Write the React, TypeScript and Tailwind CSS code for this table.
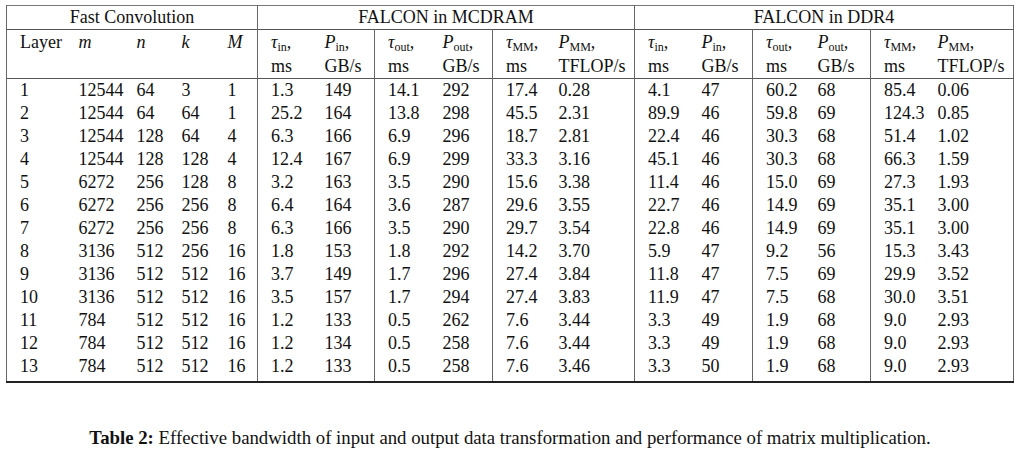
import React from "react";

const rows: string[][] = [
  ["1", "12544", "64", "3", "1", "1.3", "149", "14.1", "292", "17.4", "0.28", "4.1", "47", "60.2", "68", "85.4", "0.06"],
  ["2", "12544", "64", "64", "1", "25.2", "164", "13.8", "298", "45.5", "2.31", "89.9", "46", "59.8", "69", "124.3", "0.85"],
  ["3", "12544", "128", "64", "4", "6.3", "166", "6.9", "296", "18.7", "2.81", "22.4", "46", "30.3", "68", "51.4", "1.02"],
  ["4", "12544", "128", "128", "4", "12.4", "167", "6.9", "299", "33.3", "3.16", "45.1", "46", "30.3", "68", "66.3", "1.59"],
  ["5", "6272", "256", "128", "8", "3.2", "163", "3.5", "290", "15.6", "3.38", "11.4", "46", "15.0", "69", "27.3", "1.93"],
  ["6", "6272", "256", "256", "8", "6.4", "164", "3.6", "287", "29.6", "3.55", "22.7", "46", "14.9", "69", "35.1", "3.00"],
  ["7", "6272", "256", "256", "8", "6.3", "166", "3.5", "290", "29.7", "3.54", "22.8", "46", "14.9", "69", "35.1", "3.00"],
  ["8", "3136", "512", "256", "16", "1.8", "153", "1.8", "292", "14.2", "3.70", "5.9", "47", "9.2", "56", "15.3", "3.43"],
  ["9", "3136", "512", "512", "16", "3.7", "149", "1.7", "296", "27.4", "3.84", "11.8", "47", "7.5", "69", "29.9", "3.52"],
  ["10", "3136", "512", "512", "16", "3.5", "157", "1.7", "294", "27.4", "3.83", "11.9", "47", "7.5", "68", "30.0", "3.51"],
  ["11", "784", "512", "512", "16", "1.2", "133", "0.5", "262", "7.6", "3.44", "3.3", "49", "1.9", "68", "9.0", "2.93"],
  ["12", "784", "512", "512", "16", "1.2", "134", "0.5", "258", "7.6", "3.44", "3.3", "49", "1.9", "68", "9.0", "2.93"],
  ["13", "784", "512", "512", "16", "1.2", "133", "0.5", "258", "7.6", "3.46", "3.3", "50", "1.9", "68", "9.0", "2.93"],
];

const widths = [59, 56, 45, 46, 43, 54, 63, 55, 63, 53, 89, 54, 64, 52, 66, 53, 89];
const rightBorder = new Set([4, 6, 8, 10, 12, 14, 16]);

function cellBorder(i: number) {
  let c = "";
  if (i === 0) c += " border-l border-l-[#666]";
  if (rightBorder.has(i)) c += " border-r border-r-[#666]";
  return c;
}

function Sym({ base, sub }: { base: string; sub: string }) {
  return (
    <span className="whitespace-nowrap">
      <span className="italic">{base}</span>
      <span className="text-[12px] leading-[0px] relative top-[3px]">{sub}</span>
      <span>,</span>
    </span>
  );
}

const headers: { base: string; sub: string; unit: string }[] = [
  { base: "τ", sub: "in", unit: "ms" },
  { base: "P", sub: "in", unit: "GB/s" },
  { base: "τ", sub: "out", unit: "ms" },
  { base: "P", sub: "out", unit: "GB/s" },
  { base: "τ", sub: "MM", unit: "ms" },
  { base: "P", sub: "MM", unit: "TFLOP/s" },
];

const serif = { fontFamily: '"Liberation Serif", "Times New Roman", serif' };

export default function App() {
  return (
    <div className="w-[1020px] h-[460px] bg-white text-[#111] overflow-hidden" style={serif}>
      <div className="pl-[6px] pt-[5px]">
        <table className="border-collapse table-fixed text-[18px] leading-[23px]" style={serif}>
          <colgroup>
            {widths.map((w, i) => (
              <col key={i} style={{ width: w }} />
            ))}
          </colgroup>
          <thead>
            <tr className="border-t border-t-[#777] border-b border-b-[#555] h-[24px]">
              <th colSpan={5} className="font-normal text-center border-l border-l-[#666] border-r border-r-[#666]">
                Fast Convolution
              </th>
              <th colSpan={6} className="font-normal text-center border-r border-r-[#666]">
                FALCON in MCDRAM
              </th>
              <th colSpan={6} className="font-normal text-center border-r border-r-[#666]">
                FALCON in DDR4
              </th>
            </tr>
            <tr className="border-b border-b-[#555]">
              <th className={"font-normal text-left align-top pl-[13px] pt-[0px] leading-[24px]" + cellBorder(0)}>Layer</th>
              <th className={"font-normal italic text-left align-top pl-[13px] pt-[0px] leading-[24px]" + cellBorder(1)}>m</th>
              <th className={"font-normal italic text-left align-top pl-[13px] pt-[0px] leading-[24px]" + cellBorder(2)}>n</th>
              <th className={"font-normal italic text-left align-top pl-[13px] pt-[0px] leading-[24px]" + cellBorder(3)}>k</th>
              <th className={"font-normal italic text-left align-top pl-[13px] pt-[0px] leading-[24px]" + cellBorder(4)}>M</th>
              {[0, 1].map((g) =>
                headers.map((h, j) => {
                  const i = 5 + g * 6 + j;
                  return (
                    <th
                      key={i}
                      className={"font-normal text-left align-top pl-[13px] pt-[0px] pb-[0px] leading-[24px]" + cellBorder(i)}
                    >
                      <div className="h-[24px] overflow-visible">
                        <Sym base={h.base} sub={h.sub} />
                      </div>
                      <div className="h-[24px]">{h.unit}</div>
                    </th>
                  );
                })
              )}
            </tr>
          </thead>
          <tbody className="border-b-2 border-b-[#222]">
            {rows.map((r, ri) => (
              <tr key={ri}>
                {r.map((v, i) => (
                  <td
                    key={i}
                    className={
                      "pl-[13px] whitespace-nowrap " +
                      (ri === 0 ? "pt-[0px] " : "") +
                      (ri === rows.length - 1 ? "pb-[3px] " : "") +
                      cellBorder(i)
                    }
                  >
                    {v}
                  </td>
                ))}
              </tr>
            ))}
          </tbody>
        </table>
      </div>
      <div className="mt-[44px] text-center text-[18.8px] leading-[22px]">
        <span className="font-bold">Table 2:</span> Effective bandwidth of input and output data transformation and
        performance of matrix multiplication.
      </div>
    </div>
  );
}
